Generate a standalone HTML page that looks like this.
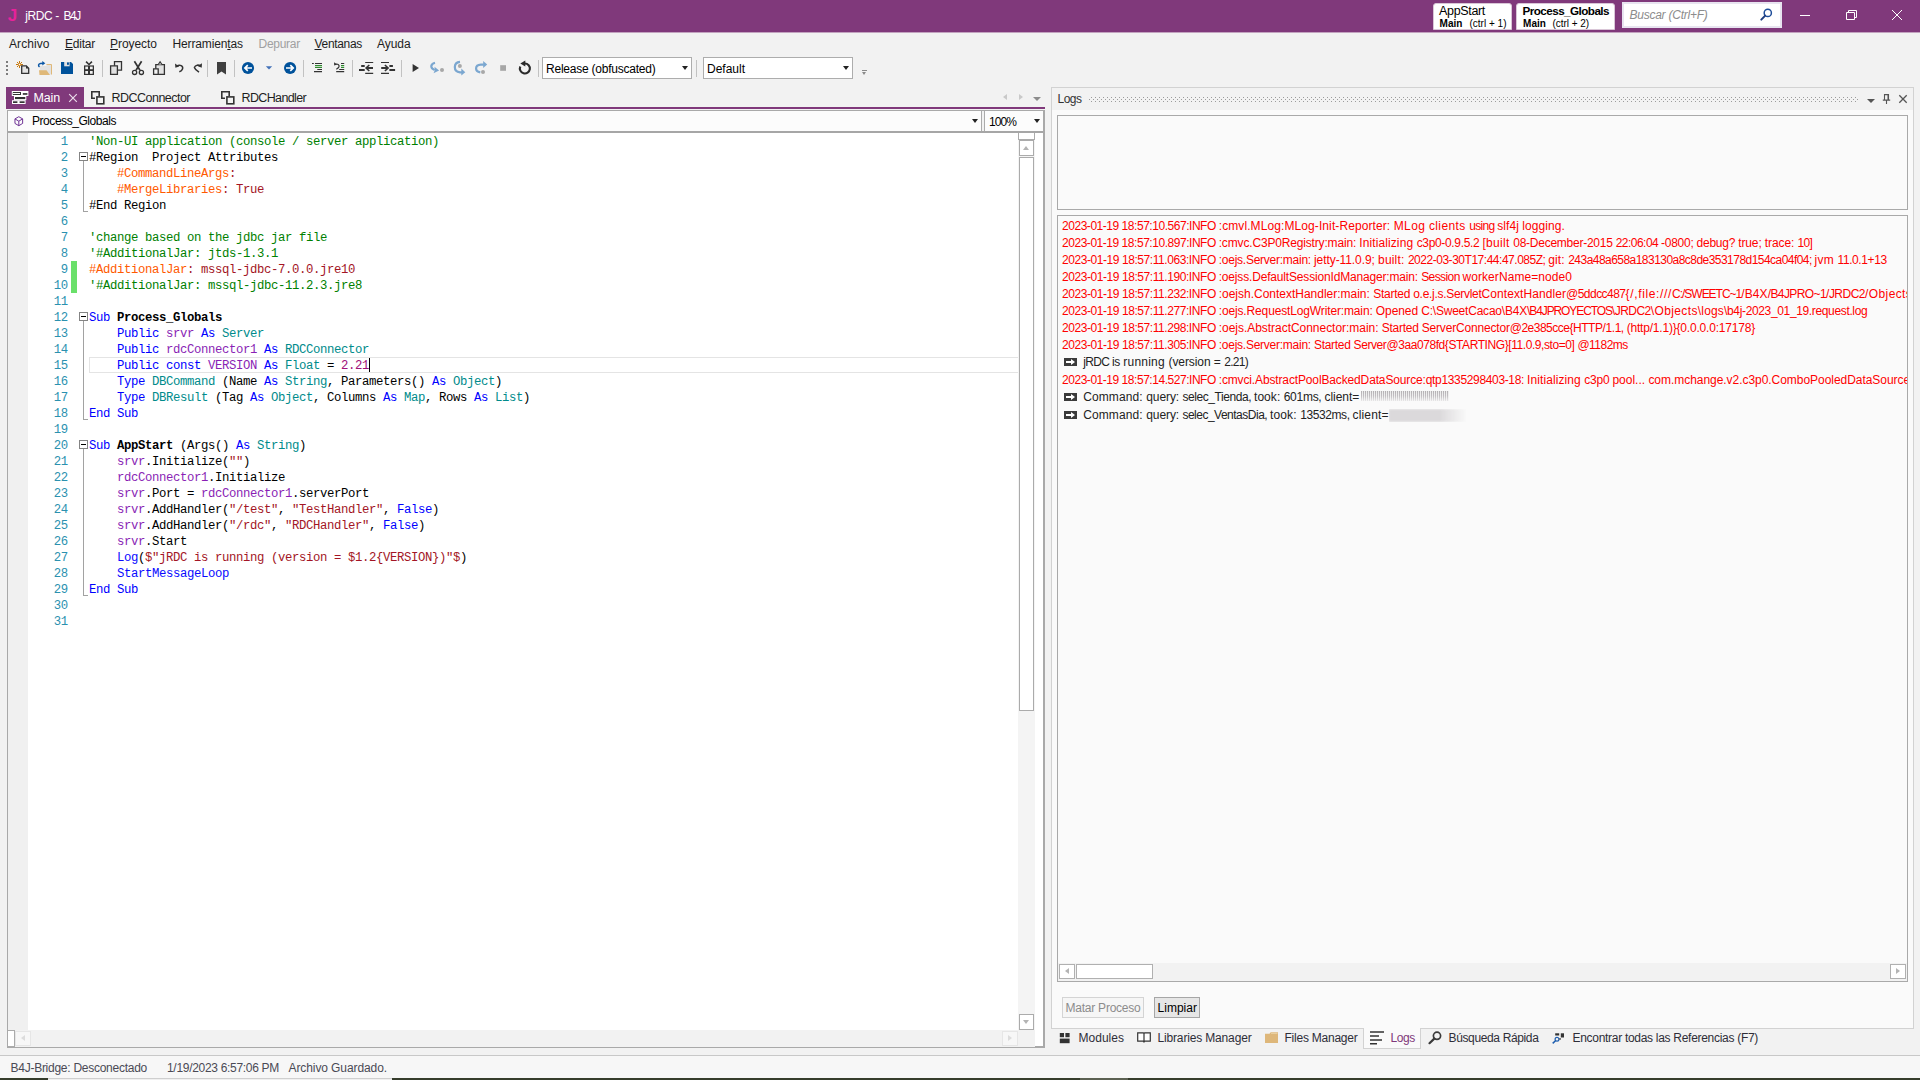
<!DOCTYPE html>
<html lang="es">
<head>
<meta charset="utf-8">
<title>jRDC - B4J</title>
<style>
*{box-sizing:border-box;margin:0;padding:0}
html,body{width:1920px;height:1080px;overflow:hidden}
body{position:relative;background:#f2f2f2;font-family:"Liberation Sans",sans-serif;font-size:12px;color:#1e1e1e}
.a{position:absolute;white-space:nowrap}
.t{position:absolute;white-space:nowrap;line-height:16px;height:16px}
svg{position:absolute;overflow:visible}
#title{left:0;top:0;width:1920px;height:32px;background:#80397b}
.qb{background:#fff;border-radius:3px 3px 0 0;top:2.5px;height:27px;border:1px solid #d9c6d7}
.sep{width:1px;background:#c2c2c2;top:59.5px;height:17px}
.combo{background:#fff;border:1px solid #adadad;height:22px;top:57px}
.arrow{width:0;height:0;border-left:3.5px solid transparent;border-right:3.5px solid transparent;border-top:4px solid #222}
#code{left:89px;top:134px;font-family:"Liberation Mono",monospace;font-size:12.3px;letter-spacing:-0.38px;color:#000}
#code div,#nums div{height:16px;line-height:16px;white-space:pre}
#nums{left:28px;top:134px;width:39.8px;text-align:right;font-family:"Liberation Mono",monospace;font-size:12.3px;letter-spacing:-0.38px;color:#2b91af}
.c{color:#008000}.k{color:#0000ff}.y{color:#008b8b}.v{color:#8a1fb5}.s{color:#a31525}.o{color:#ff5a00}.d{color:#8b0000}.b{font-weight:bold}.f{color:#0a0aff}.n{color:#a0107a}
.lg{position:absolute;left:1062px;white-space:nowrap;height:17px;line-height:17px;color:#ff0000}
.lk{color:#222}
</style>
</head>
<body>
<!-- TITLE BAR -->
<div id="title" class="a"></div><div class="a" style="left:0;top:32px;width:1920px;height:1px;background:#c3a3c0"></div>
<span class="t" style="letter-spacing:-0.969px;left:7.8px;top:8px;color:#e8229a;font-weight:bold;font-size:17px">J</span>
<span class="t" style="left:25.3px;top:7.5px;color:#fff;font-size:12px"><span style="letter-spacing:-0.400px">jRDC </span><span style="letter-spacing:0.378px">- </span><span style="letter-spacing:-1.362px">B4J</span></span>
<div class="a qb" style="left:1433px;width:79px"></div>
<span class="t" style="letter-spacing:-0.330px;left:1439px;top:3px;color:#000;font-size:12.5px">AppStart</span>
<span class="t" style="letter-spacing:0.055px;left:1439.5px;top:15.5px;color:#000;font-size:10px;font-weight:bold">Main</span>
<span class="t" style="letter-spacing:0.005px;left:1469.5px;top:15.5px;color:#000;font-size:10px">(ctrl + 1)</span>
<div class="a qb" style="left:1516px;width:99px"></div>
<span class="t" style="letter-spacing:-0.557px;left:1522.5px;top:3px;color:#000;font-size:11.7px;font-weight:bold">Process_Globals</span>
<span class="t" style="letter-spacing:0.055px;left:1523px;top:15.5px;color:#000;font-size:10px;font-weight:bold">Main</span>
<span class="t" style="letter-spacing:-0.045px;left:1552.5px;top:15.5px;color:#000;font-size:10px">(ctrl + 2)</span>
<div class="a" style="left:1622px;top:2px;width:160px;height:26px;background:#fff;border:2px solid #e8e4f0"></div>
<span class="t" style="letter-spacing:-0.246px;left:1629.5px;top:7px;color:#8c8c8c;font-size:12px;font-style:italic">Buscar (Ctrl+F)</span>
<svg style="left:1760px;top:8px" width="13" height="13" viewBox="0 0 13 13"><circle cx="7.8" cy="4.9" r="3.6" fill="none" stroke="#1f4e9a" stroke-width="1.5"/><path d="M5.2 7.6 L1.3 11.6" stroke="#1f3e80" stroke-width="2" stroke-linecap="round"/></svg>
<svg style="left:1800px;top:9px" width="104" height="12" viewBox="0 0 104 12"><g fill="none" stroke="#fff" stroke-width="1"><path d="M0 6.5 H10"/><path d="M46.5 3.5 H54.5 V10.5 H46.5 Z"/><path d="M48.5 3.5 V1.5 H56.5 V8.5 H54.5"/><path d="M92 1 L102 11 M102 1 L92 11"/></g></svg>
<!-- MENU -->
<span class="t" style="letter-spacing:0.069px;left:9px;top:36px">Archivo</span>
<span class="t" style="letter-spacing:-0.227px;left:65px;top:36px"><u>E</u>ditar</span>
<span class="t" style="letter-spacing:-0.047px;left:110px;top:36px"><u>P</u>royecto</span>
<span class="t" style="letter-spacing:-0.129px;left:172.5px;top:36px">Herramien<u>t</u>as</span>
<span class="t" style="letter-spacing:-0.266px;left:258.5px;top:36px;color:#a0a0a0">Depurar</span>
<span class="t" style="letter-spacing:-0.318px;left:314.5px;top:36px"><u>V</u>entanas</span>
<span class="t" style="letter-spacing:-0.062px;left:377px;top:36px">Ayuda</span>
<!-- TOOLBAR -->
<svg style="left:0;top:56px" width="560" height="26" viewBox="0 56 560 26">
<g fill="#7d7d7d"><rect x="6" y="61" width="2" height="2"/><rect x="6" y="65" width="2" height="2"/><rect x="6" y="69" width="2" height="2"/><rect x="6" y="73" width="2" height="2"/></g>
<!-- new -->
<g stroke="#c7780d" stroke-width="1" fill="none"><path d="M19.5 61v7M16 64.5h7M17 62l5 5M22 62l-5 5"/></g><circle cx="19.5" cy="64.5" r="1.2" fill="#fff" stroke="#c7780d" stroke-width=".8"/>
<path d="M21.7 65.8h4.6l2.4 2.4v5.2h-7z" fill="#e4e4e4" stroke="#333" stroke-width="1.3"/><path d="M26 65.5l3 3h-3z" fill="#333"/>
<!-- open -->
<path d="M46.5 64.5h5v10h-5z" fill="#e2e2e2"/><path d="M46.5 64.5h5v10" fill="none" stroke="#e0b878" stroke-width="1"/><path d="M40 66h7v9h-7z" fill="#e2e2e2"/>
<path d="M39 70.3h7.5l3.5 4.7h-10.5z" fill="#dfb878"/>
<path d="M39.5 67c-1.5-1.2-1.2-3.3 1-3.6l3-.2" fill="none" stroke="#0a56a5" stroke-width="1.5"/><path d="M42.3 61l3 2.2-3 2.2z" fill="#0a56a5"/>
<!-- save -->
<path d="M61 62h10l2 2v10h-12z" fill="#00529b"/><rect x="64.2" y="62" width="5.4" height="4.3" fill="#e2e2e2"/><rect x="67" y="62.4" width="1.9" height="2.4" fill="#00529b"/>
<!-- gift -->
<g fill="#333"><rect x="84" y="65.4" width="10" height="9.6"/><path d="M89 65.5l-3.5-3.2 1.2-1.2 2.3 2.4 2.3-2.4 1.2 1.2z"/></g>
<g fill="#f0f0f0"><rect x="85.3" y="66.6" width="2.7" height="2.6"/><rect x="90" y="66.6" width="2.7" height="2.6"/><rect x="85.3" y="71" width="2.7" height="2.8"/><rect x="90" y="71" width="2.7" height="2.8"/></g>
<!-- copy -->
<g stroke="#333" stroke-width="1.3"><path d="M114.5 61.7h7v8.5h-7z" fill="#ededed"/><path d="M110.6 65.8h6.8v8.6h-6.8z" fill="#e0e0e0"/></g>
<!-- cut -->
<g stroke="#333" fill="none"><path d="M134.4 61.3l5.6 9M141.6 61.3l-5.6 9" stroke-width="1.7"/><circle cx="134.6" cy="72.4" r="2.1" stroke-width="1.3"/><circle cx="141.4" cy="72.4" r="2.1" stroke-width="1.3"/></g>
<!-- paste -->
<g stroke="#333" stroke-width="1.3"><path d="M155.8 64.6h8.6v9.8h-8.6z" fill="#e2e2e2"/><path d="M158.4 64.4l1.7-2.6 1.7 2.6" fill="#f2f2f2" stroke-width="1.1"/><path d="M153.6 68.8h4.6v5.6h-4.6z" fill="#f4f4f4"/></g>
<!-- undo -->
<path d="M176.5 66.3c3.5-2.6 7-.2 6 2.7-.5 1.400-1.700 2.300-3.200 2.800" fill="none" stroke="#333" stroke-width="1.5"/><path d="M175 63.600l.4 4.200 3.800-1.300z" fill="#333"/>
<!-- redo -->
<path d="M194.300 67.500c1.200-2.800 4.500-3 6-1.200M194.200 67.200c.8 2.200 2.600 3.600 4.800 5" fill="none" stroke="#333" stroke-width="1.5"/><path d="M202 63.300l-.3 4.500-4-1.800z" fill="#333"/>
<!-- bookmark -->
<path d="M217 62h9v12.400l-4.500-2.900-4.500 2.900z" fill="#404040"/>
<!-- back / fwd -->
<circle cx="248" cy="68" r="6.1" fill="#00529b"/><path d="M252 68h-6M247.800 65.200l-2.900 2.800 2.900 2.800" fill="none" stroke="#fff" stroke-width="1.7"/>
<path d="M265.800 66.200h6.400l-3.200 3.400z" fill="#4472b8"/>
<circle cx="290.100" cy="68" r="6.100" fill="#00529b"/><path d="M286 68h6M290.300 65.200l2.900 2.800-2.900 2.800" fill="none" stroke="#fff" stroke-width="1.700"/>
<!-- comment -->
<g stroke-width="1.100" fill="none"><path d="M312 63.500h1.800M315 63.500h7M317.300 69.500h4.700M314 71.600h8" stroke="#333"/><path d="M315 65.600h7M315 67.500h7" stroke="#2e8b2e"/></g>
<!-- uncomment -->
<g stroke-width="1.100" fill="none"><path d="M341 63.500h3.200M339.200 69.500h5M336.200 71.600h8" stroke="#333"/><path d="M341 65.600h3.200M341 67.500h3.200" stroke="#2e8b2e"/><path d="M335 64.500c2.500-1.300 4.600.3 4 2.300-.4 1.200-1.500 1.900-2.700 2.400" stroke="#333" stroke-width="1.200"/></g><path d="M334 62.300l.2 3.300 3-1z" fill="#333"/>
<!-- outdent / indent -->
<g stroke="#333" fill="none"><path d="M365.200 62.500h8M365.200 73.400h8" stroke-width="1.100"/><path d="M361.200 66h3.500M359 70.100h5.700" stroke-width="2"/><path d="M373 68h-6" stroke-width="2"/><path d="M369.300 65l-3.200 3 3.200 3" stroke-width="1.600"/></g>
<g stroke="#333" fill="none"><path d="M381 62.500h8M381 73.400h8" stroke-width="1.100"/><path d="M389.400 66h3.500M389.400 70.100h5.700" stroke-width="2"/><path d="M381.200 68h6" stroke-width="2"/><path d="M384.900 65l3.200 3-3.200 3" stroke-width="1.600"/></g>
<!-- play -->
<path d="M412.600 63.900v8.200l6.400-4.100z" fill="#333"/>
<!-- step in -->
<path d="M435 62.700c-4.800 1.200-5 5.400-.3 7.400" fill="none" stroke="#7ba7d0" stroke-width="2.200"/><path d="M434.500 66.800l4.600 3.800-5.600 2.700 1.400-3.200z" fill="#7ba7d0"/><circle cx="442" cy="70.100" r="2" fill="#a8a8a8"/>
<!-- step over -->
<path d="M460 61.900c-6.800.6-7 9.800 0 10.400h2" fill="none" stroke="#7ba7d0" stroke-width="2.200"/><path d="M461.300 68.600l4 3.600-4 3.400z" fill="#7ba7d0"/><circle cx="459.900" cy="65.900" r="2" fill="#a8a8a8"/>
<!-- step out -->
<path d="M480.300 72.300c-5.800-1-5.600-7.400.5-7.700h3" fill="none" stroke="#7ba7d0" stroke-width="2.200"/><path d="M483.200 61.100l4 3.500-4 3.500z" fill="#7ba7d0"/><circle cx="483" cy="72" r="2" fill="#a8a8a8"/>
<!-- stop -->
<rect x="500.200" y="65.200" width="5.800" height="5.600" fill="#a6a6a6"/>
<!-- restart -->
<path d="M524.900 63.500a5 5 0 1 1 -4.600 3" fill="none" stroke="#2b2b2b" stroke-width="2.100"/><path d="M520.300 63.600l5-3v6z" fill="#2b2b2b"/>
</svg>
<div class="a sep" style="left:102px"></div><div class="a sep" style="left:207px"></div><div class="a sep" style="left:234px"></div><div class="a sep" style="left:303px"></div><div class="a sep" style="left:352px"></div><div class="a sep" style="left:401px"></div><div class="a sep" style="left:538px"></div><div class="a sep" style="left:696px"></div>
<div class="a combo" style="left:542px;width:150px"></div>
<span class="t" style="letter-spacing:-0.229px;left:546px;top:61px;color:#000">Release (obfuscated)</span>
<div class="a arrow" style="left:682px;top:66px"></div>
<div class="a combo" style="left:703px;width:150px"></div>
<span class="t" style="letter-spacing:-0.004px;left:707px;top:61px;color:#000">Default</span>
<div class="a arrow" style="left:843px;top:66px"></div>
<div class="a" style="left:862px;top:70px;width:5px;height:1px;background:#8a8a8a"></div>
<div class="a" style="left:862px;top:72px;width:0;height:0;border-left:2.5px solid transparent;border-right:2.5px solid transparent;border-top:3px solid #8a8a8a"></div>
<!-- TABS -->
<div class="a" style="left:6px;top:87px;width:78px;height:21px;background:#80397b"></div>
<div class="a" style="left:6px;top:107px;width:1039px;height:2px;background:#80397b"></div>
<svg style="left:11px;top:90px" width="18" height="15" viewBox="11 90 18 15"><g fill="#fff"><rect x="11.800" y="91" width="16.600" height="5"/><rect x="14" y="96" width="12.300" height="4.200"/><rect x="12" y="100.200" width="13.600" height="3.800"/></g><rect x="13.300" y="92.500" width="7.200" height="2" fill="#fff" stroke="#333" stroke-width="1"/><g fill="#333"><rect x="22.800" y="93.100" width="4.600" height="1.700"/><rect x="15" y="97" width="10.300" height="2.100"/><rect x="13" y="101.300" width="4.400" height="1.700"/><rect x="19.600" y="101.300" width="5" height="1.700"/></g></svg>
<span class="t" style="letter-spacing:-0.148px;left:33.500px;top:89.500px;color:#fff;font-size:12.500px">Main</span>
<svg style="left:69px;top:94px" width="8" height="8" viewBox="0 0 8 8"><path d="M.2.200l7.600 7.600M7.800.2l-7.600 7.600" stroke="#eadcea" stroke-width="1.200"/></svg>
<svg style="left:91px;top:91px" width="14" height="13" viewBox="0 0 14 13"><g fill="none" stroke="#333" stroke-width="1.600"><path d="M8.200 5v-4.200h-7.400v6.500h3.200"/><rect x="5.900" y="5.900" width="6.900" height="6.900"/></g></svg>
<span class="t" style="letter-spacing:-0.522px;left:111.500px;top:89.500px;color:#1e1e1e;font-size:12.500px">RDCConnector</span>
<svg style="left:221px;top:91px" width="14" height="13" viewBox="0 0 14 13"><g fill="none" stroke="#333" stroke-width="1.600"><path d="M8.200 5v-4.200h-7.400v6.500h3.200"/><rect x="5.900" y="5.900" width="6.900" height="6.900"/></g></svg>
<span class="t" style="letter-spacing:-0.636px;left:241.500px;top:89.500px;color:#1e1e1e;font-size:12.500px">RDCHandler</span>
<div class="a" style="left:1003px;top:93.500px;width:0;height:0;border-top:3.500px solid transparent;border-bottom:3.500px solid transparent;border-right:4px solid #c9c9c9"></div>
<div class="a" style="left:1019px;top:93.500px;width:0;height:0;border-top:3.500px solid transparent;border-bottom:3.500px solid transparent;border-left:4px solid #c9c9c9"></div>
<div class="a" style="left:1033px;top:97px;width:0;height:0;border-left:4px solid transparent;border-right:4px solid transparent;border-top:4px solid #8c8c8c"></div>
<!-- EDITOR FRAME -->
<div class="a" style="left:7px;top:110px;width:1038px;height:938px;background:#fff;border:1px solid #a9a9a9;border-right:2px solid #a9a9a9;border-bottom:2px solid #a9a9a9"></div>
<!-- sub combo -->
<div class="a" style="left:8px;top:111px;width:974px;height:20px;background:#fcfcfc;border-right:1px solid #ababab"></div>
<div class="a" style="left:982px;top:111px;width:3px;height:20px;background:#f2f2f2"></div>
<div class="a" style="left:984px;top:111px;width:59px;height:20px;background:#fcfcfc;border-left:1px solid #ababab"></div>
<div class="a" style="left:8px;top:131px;width:1035px;height:2px;background:#a6a6a6"></div>
<svg style="left:13.700px;top:115.800px" width="9.600" height="10.500" viewBox="0 0 11 12"><g fill="none" stroke="#6a2c91" stroke-width="1.100" stroke-linejoin="round"><path d="M5.500 .8l4.400 2.500v5.200l-4.400 2.600-4.400-2.600v-5.200z"/><path d="M1.100 3.300l4.400 2.600 4.400-2.600M5.500 5.900v5.200"/></g></svg>
<span class="t" style="letter-spacing:-0.448px;left:32px;top:113px;color:#000;font-size:12px">Process_Globals</span>
<div class="a arrow" style="left:972px;top:119px"></div>
<span class="t" style="letter-spacing:-0.926px;left:989px;top:113.500px;color:#000;font-size:12px">100%</span>
<div class="a arrow" style="left:1034px;top:119px"></div>
<!-- left margin -->
<div class="a" style="left:8px;top:133px;width:20px;height:897px;background:#f0f0f0"></div>
<!-- vscroll -->
<div class="a" style="left:1018px;top:133px;width:17px;height:897px;background:#f4f4f4"></div>
<div class="a" style="left:1018px;top:133px;width:17px;height:7px;background:#fff;border:1px solid #ababab;border-top:none"></div>
<div class="a" style="left:1019px;top:140px;width:15px;height:16px;background:#fff;border:1px solid #ababab"></div>
<div class="a" style="left:1023px;top:146px;width:0;height:0;border-left:3.500px solid transparent;border-right:3.500px solid transparent;border-bottom:4px solid #b4b4b4"></div>
<div class="a" style="left:1019px;top:157px;width:15px;height:554px;background:#fff;border:1px solid #ababab"></div>
<div class="a" style="left:1019px;top:1014px;width:15px;height:16px;background:#fff;border:1px solid #ababab"></div>
<div class="a" style="left:1023px;top:1020px;width:0;height:0;border-left:3.500px solid transparent;border-right:3.500px solid transparent;border-top:4px solid #b4b4b4"></div>
<!-- hscroll -->
<div class="a" style="left:8px;top:1030px;width:1027px;height:16.5px;background:#f2f2f2"></div>
<div class="a" style="left:8px;top:1030px;width:7px;height:17px;background:#fff;border:1px solid #ababab;border-left:none"></div>
<div class="a" style="left:15px;top:1031px;width:16px;height:15px;background:#f7f7f7;border:1px solid #e6e6e6"></div>
<div class="a" style="left:21px;top:1035px;width:0;height:0;border-top:3.500px solid transparent;border-bottom:3.500px solid transparent;border-right:4px solid #dcdcdc"></div>
<div class="a" style="left:1002px;top:1031px;width:16px;height:15px;background:#f7f7f7;border:1px solid #e6e6e6"></div>
<div class="a" style="left:1008px;top:1035px;width:0;height:0;border-top:3.500px solid transparent;border-bottom:3.500px solid transparent;border-left:4px solid #dcdcdc"></div>
<!-- change bar, current line, fold guides -->
<div class="a" style="left:71px;top:261px;width:6px;height:32px;background:#6ae06a"></div>
<div class="a" style="left:89px;top:357px;width:929px;height:16px;border:1px solid #e4e4e4;border-right:none"></div>
<!-- CODE -->
<div id="nums" class="a"><div>1</div><div>2</div><div>3</div><div>4</div><div>5</div><div>6</div><div>7</div><div>8</div><div>9</div><div>10</div><div>11</div><div>12</div><div>13</div><div>14</div><div>15</div><div>16</div><div>17</div><div>18</div><div>19</div><div>20</div><div>21</div><div>22</div><div>23</div><div>24</div><div>25</div><div>26</div><div>27</div><div>28</div><div>29</div><div>30</div><div>31</div></div>
<div id="code" class="a">
<div><span class="c">'Non-UI application (console / server application)</span></div>
<div>#Region  Project Attributes</div>
<div>    <span class="o">#CommandLineArgs</span><span class="s">:</span></div>
<div>    <span class="o">#MergeLibraries</span><span class="s">: True</span></div>
<div>#End Region</div>
<div></div>
<div><span class="c">'change based on the jdbc jar file</span></div>
<div><span class="c">'#AdditionalJar: jtds-1.3.1</span></div>
<div><span class="o">#AdditionalJar</span><span class="s">: mssql-jdbc-7.0.0.jre10</span></div>
<div><span class="c">'#AdditionalJar: mssql-jdbc-11.2.3.jre8</span></div>
<div></div>
<div><span class="k">Sub </span><span class="b">Process_Globals</span></div>
<div><span class="k">    Public </span><span class="v">srvr</span><span class="k"> As </span><span class="y">Server</span></div>
<div><span class="k">    Public </span><span class="v">rdcConnector1</span><span class="k"> As </span><span class="y">RDCConnector</span></div>
<div><span class="k">    Public const </span><span class="v">VERSION</span><span class="k"> As </span><span class="y">Float</span> = <span class="n">2.21</span></div>
<div><span class="k">    Type </span><span class="y">DBCommand</span> (Name<span class="k"> As </span><span class="y">String</span>, Parameters()<span class="k"> As </span><span class="y">Object</span>)</div>
<div><span class="k">    Type </span><span class="y">DBResult</span> (Tag<span class="k"> As </span><span class="y">Object</span>, Columns<span class="k"> As </span><span class="y">Map</span>, Rows<span class="k"> As </span><span class="y">List</span>)</div>
<div><span class="k">End Sub</span></div>
<div></div>
<div><span class="k">Sub </span><span class="b">AppStart</span> (Args()<span class="k"> As </span><span class="y">String</span>)</div>
<div>    <span class="v">srvr</span>.Initialize(<span class="s">""</span>)</div>
<div>    <span class="v">rdcConnector1</span>.Initialize</div>
<div>    <span class="v">srvr</span>.Port = <span class="v">rdcConnector1</span>.serverPort</div>
<div>    <span class="v">srvr</span>.AddHandler(<span class="s">"/test"</span>, <span class="s">"TestHandler"</span>, <span class="k">False</span>)</div>
<div>    <span class="v">srvr</span>.AddHandler(<span class="s">"/rdc"</span>, <span class="s">"RDCHandler"</span>, <span class="k">False</span>)</div>
<div>    <span class="v">srvr</span>.Start</div>
<div>    <span class="f">Log</span>(<span class="s">$"jRDC is running (version = $1.2{VERSION})"$</span>)</div>
<div>    <span class="f">StartMessageLoop</span></div>
<div><span class="k">End Sub</span></div>
<div></div>
<div></div>
</div>
<div class="a" style="left:79px;top:152px;width:9px;height:9px;border:1px solid #848484;background:#fff"></div><div class="a" style="left:81px;top:156px;width:5px;height:1px;background:#000"></div><div class="a" style="left:83px;top:161px;width:1px;height:50px;background:#a2a2a2"></div><div class="a" style="left:83px;top:211px;width:5px;height:1px;background:#a2a2a2"></div>
<div class="a" style="left:79px;top:312px;width:9px;height:9px;border:1px solid #848484;background:#fff"></div><div class="a" style="left:81px;top:316px;width:5px;height:1px;background:#000"></div><div class="a" style="left:83px;top:321px;width:1px;height:98px;background:#a2a2a2"></div><div class="a" style="left:83px;top:419px;width:5px;height:1px;background:#a2a2a2"></div>
<div class="a" style="left:79px;top:440px;width:9px;height:9px;border:1px solid #848484;background:#fff"></div><div class="a" style="left:81px;top:444px;width:5px;height:1px;background:#000"></div><div class="a" style="left:83px;top:449px;width:1px;height:146px;background:#a2a2a2"></div><div class="a" style="left:83px;top:595px;width:5px;height:1px;background:#a2a2a2"></div>
<div class="a" style="left:369px;top:358px;width:1px;height:14px;background:#000"></div>
<!-- LOGS PANEL -->
<div class="a" style="left:1051px;top:87px;width:863px;height:942px;background:#fafafa;border:1px solid #d2d2d2"></div>
<div class="a" style="left:1052px;top:88px;width:861px;height:22px;background:#f2f2f2"></div>
<span class="t" style="letter-spacing:-0.508px;left:1057.500px;top:91px;color:#333">Logs</span>
<svg style="left:1089px;top:97px" width="770" height="6"><defs><pattern id="dp" width="4" height="4" patternUnits="userSpaceOnUse"><rect x="2" y="0" width="1" height="1" fill="#9c9c9c"/><rect x="0" y="2" width="1" height="1" fill="#9c9c9c"/></pattern></defs><rect width="769" height="5" fill="url(#dp)"/></svg>
<div class="a" style="left:1867px;top:99px;width:0;height:0;border-left:4px solid transparent;border-right:4px solid transparent;border-top:4px solid #555"></div>
<svg style="left:1882px;top:94px" width="9" height="10" viewBox="0 0 9 10"><path d="M2.500.6h4v5.400h-4zM.8 6.100h7.400M4.500 6.100v3.800" fill="none" stroke="#555" stroke-width="1.100"/><path d="M5.500.6h1v5.400h-1z" fill="#555"/></svg>
<svg style="left:1899px;top:95px" width="8" height="8" viewBox="0 0 8 8"><path d="M.3.300l7.400 7.400M7.700.3l-7.400 7.400" stroke="#555" stroke-width="1.300"/></svg>
<div class="a" style="left:1057px;top:115px;width:851px;height:95px;background:#fafafa;border:1px solid #a9a9a9"></div>
<div class="a" style="left:1057px;top:215px;width:851px;height:767px;background:#fafafa;border:1px solid #a9a9a9"></div>
<!-- hscroll -->
<div class="a" style="left:1058px;top:963px;width:849px;height:18px;background:#f2f2f2"></div>
<div class="a" style="left:1059px;top:964px;width:16px;height:15px;background:#fff;border:1px solid #b0b0b0"></div>
<div class="a" style="left:1065px;top:968px;width:0;height:0;border-top:3.500px solid transparent;border-bottom:3.500px solid transparent;border-right:4px solid #b4b4b4"></div>
<div class="a" style="left:1076px;top:964px;width:77px;height:15px;background:#fff;border:1px solid #b0b0b0"></div>
<div class="a" style="left:1890px;top:964px;width:16px;height:15px;background:#fff;border:1px solid #b0b0b0"></div>
<div class="a" style="left:1896px;top:968px;width:0;height:0;border-top:3.500px solid transparent;border-bottom:3.500px solid transparent;border-left:4px solid #b4b4b4"></div>
<!-- buttons -->
<div class="a" style="left:1062px;top:997px;width:82px;height:21px;background:#f6f6f6;border:1px solid #d4d4d4"></div>
<span class="t" style="letter-spacing:-0.233px;left:1065.500px;top:1000px;color:#8c8c8c">Matar Proceso</span>
<div class="a" style="left:1154px;top:997px;width:46px;height:21px;background:#e6e6e6;border:1px solid #a6a6a6"></div>
<span class="t" style="letter-spacing:0.020px;left:1157.500px;top:1000px;color:#000">Limpiar</span>
<!-- LOG TEXT -->
<div class="a" style="left:1058px;top:216px;width:849px;height:747px;overflow:hidden">
<div class="lg" style="left:4px;top:2px"><span style="letter-spacing:-0.463px">2023-01-19 18:57:10.567:INFO </span><span style="letter-spacing:0.095px">:cmvl.MLog:MLog-Init-Reporter: </span><span style="letter-spacing:0.377px">MLog clients </span><span style="letter-spacing:-0.689px">using </span><span style="letter-spacing:0.063px">slf4j logging.</span></div>
<div class="lg" style="left:4px;top:19px"><span style="letter-spacing:-0.463px">2023-01-19 18:57:10.897:INFO </span><span style="letter-spacing:-0.164px">:cmvc.C3P0Registry:main: </span><span style="letter-spacing:0.098px">Initializing </span><span style="letter-spacing:-0.328px">c3p0-0.9.5.2 </span><span style="letter-spacing:0.302px">[built </span><span style="letter-spacing:-0.249px">08-December-2015 </span><span style="letter-spacing:-0.527px">22:06:04 </span><span style="letter-spacing:-0.266px">-0800; </span><span style="letter-spacing:-0.242px">debug? </span><span style="letter-spacing:-0.127px">true; </span><span style="letter-spacing:-0.108px">trace: </span><span style="letter-spacing:-0.596px">10]</span></div>
<div class="lg" style="left:4px;top:36px"><span style="letter-spacing:-0.432px">2023-01-19 18:57:11.063:INFO </span><span style="letter-spacing:-0.250px">:oejs.Server:main: </span><span style="letter-spacing:-0.075px">jetty-11.0.9; </span><span style="letter-spacing:0.159px">built: </span><span style="letter-spacing:-0.476px">2022-03-30T17:44:47.085Z; </span><span style="letter-spacing:0.111px">git: </span><span style="letter-spacing:-0.537px">243a48a658a183130a8c8de353178d154ca04f04; </span><span style="letter-spacing:0.225px">jvm </span><span style="letter-spacing:-0.403px">11.0.1+13</span></div>
<div class="lg" style="left:4px;top:53px"><span style="letter-spacing:-0.432px">2023-01-19 18:57:11.190:INFO </span><span style="letter-spacing:-0.170px">:oejss.DefaultSessionIdManager:main: </span><span style="letter-spacing:-0.591px">Session </span><span style="letter-spacing:0.068px">workerName=node0</span></div>
<div class="lg" style="left:4px;top:70px"><span style="letter-spacing:-0.432px">2023-01-19 18:57:11.232:INFO </span><span style="letter-spacing:-0.012px">:oejsh.ContextHandler:main: </span><span style="letter-spacing:-0.241px">Started </span><span style="letter-spacing:-0.294px">o.e.j.s.Servlet</span><span style="letter-spacing:0.079px">ContextHandler</span><span style="letter-spacing:-0.526px">@5ddcc487</span><span style="letter-spacing:0.649px">{/,file:///</span><span style="letter-spacing:-1.014px">C:/SWEETC~1</span><span style="letter-spacing:0.096px">/B4X</span><span style="letter-spacing:-0.589px">/B4JPRO~1</span><span style="letter-spacing:-0.503px">/JRDC2</span><span style="letter-spacing:0.398px">/Object</span>s/,AVAILABLE}</div>
<div class="lg" style="left:4px;top:87px"><span style="letter-spacing:-0.432px">2023-01-19 18:57:11.277:INFO </span><span style="letter-spacing:-0.141px">:oejs.RequestLogWriter:main: </span><span style="letter-spacing:-0.092px">Opened </span><span style="letter-spacing:-0.213px">C:\SweetCacao</span><span style="letter-spacing:-0.204px">\B4X</span><span style="letter-spacing:-1.103px">\B4JPROYECTOS</span><span style="letter-spacing:-0.519px">\JRDC2</span><span style="letter-spacing:0.373px">\Objects</span><span style="letter-spacing:0.188px">\logs</span><span style="letter-spacing:-0.352px">\b4j-2023_01_19.request.log</span></div>
<div class="lg" style="left:4px;top:104px"><span style="letter-spacing:-0.432px">2023-01-19 18:57:11.298:INFO </span><span style="letter-spacing:-0.033px">:oejs.AbstractConnector:main: </span><span style="letter-spacing:-0.266px">Started </span><span style="letter-spacing:-0.175px">ServerConnector</span><span style="letter-spacing:-0.515px">@2e385cce</span><span style="letter-spacing:-0.430px">{HTTP/1.1, </span><span style="letter-spacing:-0.198px">(http/1.1)}{0.0.0.0:17178}</span></div>
<div class="lg" style="left:4px;top:121px"><span style="letter-spacing:-0.432px">2023-01-19 18:57:11.305:INFO </span><span style="letter-spacing:-0.250px">:oejs.Server:main: </span><span style="letter-spacing:-0.304px">Started </span><span style="letter-spacing:-0.421px">Server@3aa078fd{STARTING}[11.0.9,sto=0] </span><span style="letter-spacing:-0.512px">@1182ms</span></div>
<div class="lg" style="left:4px;top:156px"><span style="letter-spacing:-0.463px">2023-01-19 18:57:14.527:INFO </span><span style="letter-spacing:-0.139px">:cmvci.AbstractPoolBackedDataSource:</span><span style="letter-spacing:-0.347px">qtp1335298403-18: </span><span style="letter-spacing:0.098px">Initializing </span><span style="letter-spacing:-0.252px">c3p0 </span><span style="letter-spacing:-0.004px">pool... </span><span style="letter-spacing:-0.043px">com.mchange.v2.c3p0.ComboPooledDataSourc</span>e [ acquireIncrement</div>
<svg style="left:6px;top:142px" width="13" height="8" viewBox="0 0 13 8"><rect width="13" height="8" fill="#3a3a3a"/><path d="M2 3h5v-2l4 3-4 3v-2h-5z" fill="#fff"/></svg>
<div class="lg lk" style="left:25.2px;top:138px"><span style="letter-spacing:-0.660px">jRDC </span><span style="letter-spacing:-0.200px">is </span><span style="letter-spacing:0.228px">running </span><span style="letter-spacing:-0.080px">(version </span><span style="letter-spacing:0.028px">= </span><span style="letter-spacing:-0.672px">2.21)</span></div>
<svg style="left:6px;top:177px" width="13" height="8" viewBox="0 0 13 8"><rect width="13" height="8" fill="#3a3a3a"/><path d="M2 3h5v-2l4 3-4 3v-2h-5z" fill="#fff"/></svg>
<div class="lg lk" style="left:25.2px;top:173px"><span style="letter-spacing:0.108px">Command: </span><span style="letter-spacing:-0.070px">query: </span><span style="letter-spacing:-0.429px">selec_Tienda, </span><span style="letter-spacing:0.057px">took: </span><span style="letter-spacing:-0.270px">601ms, </span><span style="letter-spacing:-0.033px">client=</span></div>
<svg style="left:6px;top:195px" width="13" height="8" viewBox="0 0 13 8"><rect width="13" height="8" fill="#3a3a3a"/><path d="M2 3h5v-2l4 3-4 3v-2h-5z" fill="#fff"/></svg>
<div class="lg lk" style="left:25.2px;top:191px"><span style="letter-spacing:0.108px">Command: </span><span style="letter-spacing:-0.070px">query: </span><span style="letter-spacing:-0.498px">selec_VentasDia, </span><span style="letter-spacing:0.140px">took: </span><span style="letter-spacing:-0.405px">13532ms, </span><span style="letter-spacing:0.138px">client=</span></div>
<div class="a" style="left:303px;top:175px;width:88px;height:10px;background:repeating-linear-gradient(90deg,#b4b0b4 0 1px,#ececec 1px 2px);filter:blur(.4px);-webkit-mask-image:linear-gradient(180deg,#000 0,rgba(0,0,0,.8) 50%,rgba(0,0,0,.25) 100%);mask-image:linear-gradient(180deg,#000 0,rgba(0,0,0,.8) 50%,rgba(0,0,0,.25) 100%)"></div>
<div class="a" style="left:331px;top:193px;width:78px;height:13px;background:repeating-linear-gradient(90deg,#c6c2c6 0 1px,#f0f0f0 1px 2px);filter:blur(.8px);-webkit-mask-image:linear-gradient(90deg,#000 0,#000 65%,transparent 100%);mask-image:linear-gradient(90deg,#000 0,#000 65%,transparent 100%)"></div>
</div>
<!-- BOTTOM TABS -->
<svg style="left:1059px;top:1033px" width="12" height="11" viewBox="0 0 12 11"><g fill="#333"><rect x=".8" y="0" width="4.200" height="4.200"/><rect x="6.400" y="0" width="4.200" height="4.200"/><rect x=".8" y="5.600" width="9.800" height="4.600"/></g></svg>
<span class="t" style="letter-spacing:0.020px;left:1078.500px;top:1030px;color:#2e2e38">Modules</span>
<svg style="left:1137px;top:1032px" width="14" height="11" viewBox="0 0 14 11"><path d="M.7.800h5.600l.7.700.7-.7h5.600v8.400h-5.600l-.7.800-.7-.8h-5.600zM7 1.500v8.500" fill="#fff" stroke="#333" stroke-width="1.200"/></svg>
<span class="t" style="letter-spacing:-0.160px;left:1157.500px;top:1030px;color:#2e2e38">Libraries Manager</span>
<svg style="left:1265px;top:1032px" width="14" height="12" viewBox="0 0 14 12"><path d="M0 1.800h4.500l1.200-1.500h7.300v10.800h-13z" fill="#deb77a"/><path d="M6 1.300h6.500" stroke="#f0dcb8" stroke-width=".8"/></svg>
<span class="t" style="letter-spacing:-0.233px;left:1284.500px;top:1030px;color:#2e2e38">Files Manager</span>
<div class="a" style="left:1363px;top:1028px;width:58px;height:21px;background:#fafafa;border:1px solid #d2d2d2;border-top:none"></div>
<svg style="left:1370px;top:1031px" width="14" height="14" viewBox="0 0 14 14"><path d="M0 1h14M0 5h9M0 9h12M0 12.800h7" stroke="#333" stroke-width="1.600"/></svg>
<span class="t" style="letter-spacing:-0.383px;left:1390.500px;top:1030px;color:#80397b">Logs</span>
<svg style="left:1428px;top:1031px" width="14" height="13" viewBox="0 0 14 13"><circle cx="9" cy="4.800" r="3.600" fill="none" stroke="#3a3a3a" stroke-width="1.700"/><path d="M6.300 7.600l-4.800 4.600" stroke="#3a3a3a" stroke-width="2.200" stroke-linecap="round"/></svg>
<span class="t" style="letter-spacing:-0.361px;left:1448.500px;top:1030px;color:#2e2e38">Búsqueda Rápida</span>
<svg style="left:1552px;top:1033px" width="13" height="11" viewBox="0 0 13 11"><rect x="3.200" y=".3" width="4" height="2.200" fill="#333"/><rect x="8.800" y=".3" width="3.200" height="4.200" fill="#333"/><circle cx="5" cy="6.300" r="1.900" fill="none" stroke="#1f5fb0" stroke-width="1.200"/><path d="M3.500 7.800l-2.800 2.600" stroke="#1f5fb0" stroke-width="1.500"/><rect x="7.300" y="5.200" width="1.500" height="1.500" fill="#333"/></svg>
<span class="t" style="letter-spacing:-0.294px;left:1572.500px;top:1030px;color:#2e2e38">Encontrar todas las Referencias (F7)</span>
<!-- STATUS BAR -->
<div class="a" style="left:0;top:1055px;width:1920px;height:25px;background:#f7f7f7;border-top:1px solid #c8c8c8"></div>
<span class="t" style="letter-spacing:-0.260px;left:10.500px;top:1060px;color:#4a4a55">B4J-Bridge: Desconectado</span>
<span class="t" style="letter-spacing:-0.305px;left:167px;top:1060px;color:#4a4a55">1/19/2023 6:57:06 PM</span>
<span class="t" style="letter-spacing:-0.092px;left:288.500px;top:1060px;color:#4a4a55">Archivo Guardado.</span>
<div class="a" style="left:0;top:1078px;width:48px;height:2px;background:#363d2c"></div>
<div class="a" style="left:48px;top:1078px;width:344px;height:2px;background:#f0f0f0;border-top:1px solid #cfcfcf"></div><div class="a" style="left:1080px;top:1078px;width:48px;height:2px;background:#5c6152;z-index:2"></div>
<div class="a" style="left:392px;top:1078px;width:1528px;height:2px;background:#363d2c"></div>
</body>
</html>
